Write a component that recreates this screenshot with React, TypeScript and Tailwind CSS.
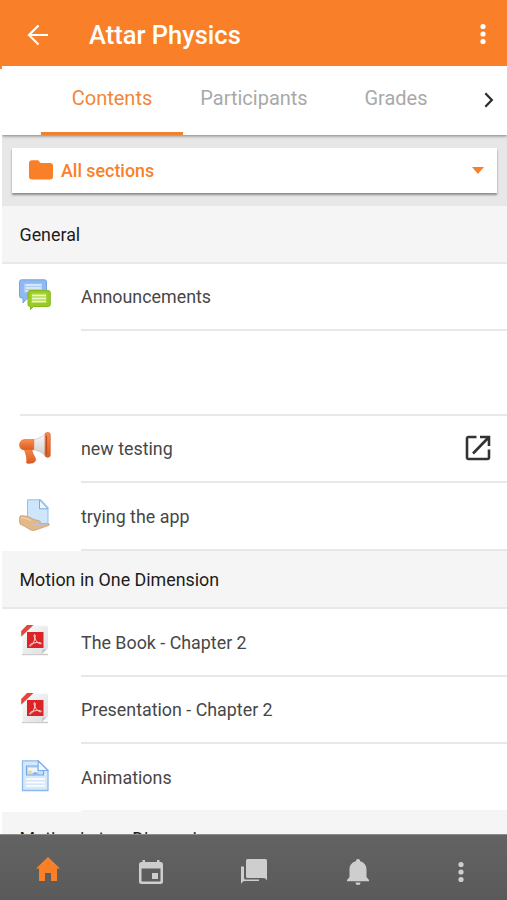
import type { ReactNode } from "react";

type Activity = { id: string; title: string; icon: ReactNode; external?: boolean };

const TABS = [
  { label: "Contents", active: true },
  { label: "Participants", active: false },
  { label: "Grades", active: false },
];

function ForumIcon() {
  return (
    <svg viewBox="0 0 32 32" className="h-8 w-8">
      <path d="M2.500.8h23a2 2 0 0 1 2 2V17a2 2 0 0 1-2 2H8.500l-4.500 5V19H2.500a2 2 0 0 1-2-2V2.800a2 2 0 0 1 2-2z" fill="#8fb9f0" stroke="#74a3e4" />
      <path d="M5 4.500h18v9H5z" fill="#a9cbf6" />
      <path d="M6.500 6h16M6.500 9h16M6.500 12h8" stroke="#e6f0fd" strokeWidth="1.400" />
      <path d="M11 11.500h18.300a2 2 0 0 1 2 2v12a2 2 0 0 1-2 2H14.500l-3 3v-3H11a2 2 0 0 1-2-2v-12a2 2 0 0 1 2-2z" fill="#9acb22" stroke="#82b720" />
      <path d="M12.500 14.500h15v9.500h-15z" fill="#b4dc4c" />
      <path d="M13 16.500h14M13 19.500h14M13 22.500h14" stroke="#f0fad0" strokeWidth="1.400" />
    </svg>
  );
}

function MegaphoneIcon() {
  return (
    <svg viewBox="0 0 32 32" className="h-8 w-8">
      <defs>
        <linearGradient id="horn" x1="0" y1="0" x2="0" y2="1">
          <stop offset="0" stopColor="#fb8f4c" />
          <stop offset="1" stopColor="#dc5a20" />
        </linearGradient>
        <linearGradient id="cone" x1="0" y1="0" x2="0" y2="1">
          <stop offset="0" stopColor="#fcfcfc" />
          <stop offset="1" stopColor="#cbcbcb" />
        </linearGradient>
      </defs>
      <path d="M4.500 15.500h8.700c-.7 2.500.1 5 1.500 7.500l1.900 4c.4 1-.2 1.800-.8 2.500-.4.900-1.300 1.300-2.300 1.400l-4.500.5c-1.500-.2-1.700-.8-1.400-1.800.7-2.400-.4-8.100-3.100-14.100z" fill="url(#horn)" stroke="#cf5420" strokeWidth=".6" />
      <path d="M14 7.600c5-.5 9-2.600 12.500-6.400v23c-3.500-4-7.500-6-12.500-6.500z" fill="url(#cone)" stroke="#bdbdbd" strokeWidth=".6" />
      <path d="M14.800 7.500v10.200H3.500C1.500 17 .6 15 .6 12.700.6 10 2.500 7.900 5.500 7.500z" fill="url(#horn)" stroke="#dc6a34" strokeWidth=".6" />
      <rect x="26" y=".6" width="5.300" height="24.600" rx="2.200" fill="url(#horn)" stroke="#cf5420" strokeWidth=".6" />
      <path d="M27.600 4v18" stroke="#b9471a" strokeWidth="1" strokeLinecap="round" />
    </svg>
  );
}

function AssignIcon() {
  return (
    <svg viewBox="0 0 32 32" className="h-8 w-8">
      <path d="M8.500.8H22l7 7.500V26H8.500z" fill="#cde6fb" stroke="#93c0ec" />
      <path d="M20.500.8v9H29z" fill="#eef7ff" stroke="#76aae4" />
      <path d="M1 17c4-.6 8 .2 11 2 2.500 1.500 5 2.200 7.500 2.500 2 .3 2.500 2 1 3l9.500.3c.8.600.3 1.300-.6 1.800L16 31.200c-2 .5-4 .2-6-1.200l-4-2.500-5-2.500C.3 22 .3 19 1 17z" fill="#e3b98c" stroke="#c39463" strokeWidth=".7" />
      <path d="M13.500 24.800h7l8.500.2-8 1.600-7-.6z" fill="#b7c3da" />
      <path d="M2 19c3-.4 7 .5 10 2.500" stroke="#f3d2a8" strokeWidth="1.300" fill="none" />
    </svg>
  );
}

function PdfIcon() {
  return (
    <svg viewBox="0 0 32 32" className="h-8 w-8">
      <defs>
        <linearGradient id="sheet" x1="0" y1="0" x2="1" y2="1">
          <stop offset="0" stopColor="#fafafa" />
          <stop offset="1" stopColor="#dcdde1" />
        </linearGradient>
      </defs>
      <path d="M3 29.500h26" stroke="#c8c8c8" strokeWidth="1.400" />
      <path d="M13 .8h14a2 2 0 0 1 2 2V23l-6.500 6.200H5A1.500 1.500 0 0 1 3.500 27.700V11z" fill="url(#sheet)" />
      <path d="M22.500 29.200c1-1.500 1-3.200.8-4.700 2 .2 4.300 0 5.700-1.500z" fill="#c3c4c8" />
      <path d="M8 0h6.500L2.200 11.800V6z" fill="#e2473d" />
      <path d="M8 7h16.500v16H8z" fill="#de2326" />
      <path d="M15.500 9.500c1 0 .8 2.500.3 4.500-.8 3-2.800 6.500-4.600 7-1.300.2-.6-1.600 2-2.500 2.500-.9 6-1.300 8.200-.8 2 .6.5 1.700-1.200.8-2.300-1.100-4.300-4-4.900-6.500-.3-1.500-.3-2.500.2-2.500z" fill="none" stroke="#fbd8d6" strokeWidth="1" />
    </svg>
  );
}

function PageIcon() {
  return (
    <svg viewBox="0 0 32 32" className="h-8 w-8">
      <path d="M3.500.8h15.700L29 10.500v20H3.500z" fill="#d6e9fb" stroke="#8db8ef" strokeWidth="1.300" />
      <path d="M7.500 6h12l5 4.500V15h-17z" fill="#c5def8" stroke="#77a8e8" strokeWidth="1.200" />
      <path d="M9 8h9v5.500H9z" fill="#eef5fb" />
      <path d="M9 14v-3l2.500-1 3 4z" fill="#e6dd9c" />
      <path d="M13 14.200l3-2.500 4 2.500z" fill="#7fb0ea" />
      <path d="M19.200.8v9.700H29z" fill="#f1f8ff" stroke="#80aeeb" strokeWidth="1.200" />
      <path d="M7 19h19M7 22.500h19M7 26h19" stroke="#fff" strokeWidth="1.600" />
    </svg>
  );
}

function DotsIcon({ className }: { className: string }) {
  return (
    <svg viewBox="0 0 6 22" className={className} fill="currentColor">
      <circle cx="3" cy="3.500" r="2.600" />
      <circle cx="3" cy="11" r="2.600" />
      <circle cx="3" cy="18.500" r="2.600" />
    </svg>
  );
}

const GENERAL: Activity[] = [
  { id: "new-testing", title: "new testing", icon: <MegaphoneIcon />, external: true },
  { id: "trying", title: "trying the app", icon: <AssignIcon /> },
];

const MOTION: Activity[] = [
  { id: "book", title: "The Book - Chapter 2", icon: <PdfIcon /> },
  { id: "presentation", title: "Presentation - Chapter 2", icon: <PdfIcon /> },
  { id: "animations", title: "Animations", icon: <PageIcon /> },
];

function ActivityRow({ title, icon, external }: Activity) {
  return (
    <div className="group flex h-[67.7px] shrink-0 pl-[17px]">
      <div className="w-[62px] shrink-0 pt-4">{icon}</div>
      <div className="flex flex-1 items-center justify-between border-b-2 border-[#e8e8e8] pr-[15px] group-last-of-type:border-[#f4f4f4]">
        <span className="pt-[1.5px] text-[17.85px] leading-none text-[#474747]">{title}</span>
        {external && (
          <svg viewBox="0 0 28 28" className="h-7 w-7" fill="none" stroke="#333" strokeWidth="2.600">
            <path d="M12.500 3H4.500A1.500 1.500 0 0 0 3 4.500v19A1.500 1.500 0 0 0 4.500 25h19a1.500 1.500 0 0 0 1.500-1.500V15.500" />
            <path d="M16 3h9v9M25 3 9 19.500" />
          </svg>
        )}
      </div>
    </div>
  );
}

function SectionHeader({ title }: { title: string }) {
  return (
    <h2 className="flex h-[58px] shrink-0 items-center border-b-2 border-[#e9e9e9] bg-[#f5f5f5] pt-0.5 pl-[17.5px] text-[17.85px] leading-none text-[#1c1c1c] last:h-[54px]">
      {title}
    </h2>
  );
}

export default function App() {
  return (
    <div className="flex h-[900px] w-[507px] flex-col overflow-hidden bg-white font-['Roboto',sans-serif]">
      <header className="flex h-[66px] shrink-0 items-center bg-[#f98029] pr-[21.5px] pl-[27px] text-white">
        <svg viewBox="0 0 22 22" className="mt-1 h-[22px] w-[22px]" fill="none" stroke="currentColor" strokeWidth="2.200">
          <path d="M11.500 1.500 2 11l9.500 9.500M2 11h19" />
        </svg>
        <h1 className="mt-[5px] ml-10 flex-1 text-[25.5px] leading-none font-medium">Attar Physics</h1>
        <DotsIcon className="mt-0.5 h-[22px] w-[6px]" />
      </header>

      <main className="flex min-h-0 flex-1 flex-col overflow-hidden">
        <div className="flex shrink-0">
          <div className="h-[2.5px] w-0.5 bg-[#f98029]" />
          <nav className="z-10 flex h-[69px] flex-1 bg-white pl-[39px] shadow-[0_1px_3px_rgba(0,0,0,0.45)] [clip-path:inset(0_0_-5px_0)]">
            {TABS.map((t) => (
              <div
                key={t.label}
                className={
                  t.active
                    ? "flex w-[142px] items-center justify-center border-b-3 border-[#f0822f] pb-0.5 text-[20px] text-[#f0873a]"
                    : "flex w-[142px] items-center justify-center border-b-3 border-transparent pb-0.5 text-[20px] text-[#a9a9a9]"
                }
              >
                {t.label}
              </div>
            ))}
            <svg viewBox="0 0 10 16" className="mt-[26px] ml-[17px] h-4 w-[10px]" fill="none" stroke="#2e2e2e" strokeWidth="2.300">
              <path d="m1.300 1.300 6.500 6.700-6.500 6.700" />
            </svg>
          </nav>
        </div>

        <div className="ml-0.5 flex shrink-0 flex-col">
          <div className="bg-[#e7e7e7] px-[10px] py-[13px]">
            <button className="flex h-[45px] w-full items-center bg-white pr-[13.5px] pl-[17px] text-[#f98029] shadow-[0_2px_2px_rgba(0,0,0,0.4)]">
              <svg viewBox="0 0 24 20" className="-mt-0.5 h-5 w-6" fill="currentColor">
                <path d="M3 .3h5.500c1.800 0 1.800 2.700 3.500 2.700h9a3 3 0 0 1 3 3v10.500a3 3 0 0 1-3 3H3a3 3 0 0 1-3-3V3.300a3 3 0 0 1 3-3z" />
              </svg>
              <span className="ml-2 flex-1 text-left text-[17.85px] leading-none font-medium">All sections</span>
              <svg viewBox="0 0 12 7" className="h-[7px] w-3" fill="currentColor">
                <path d="M0 0h12L6 7z" />
              </svg>
            </button>
          </div>

          <SectionHeader title="General" />
          <div className="flex h-[67px] shrink-0 pl-[17px]">
            <div className="w-[62px] shrink-0 pt-[15px]">
              <ForumIcon />
            </div>
            <div className="flex flex-1 items-center border-b-2 border-[#e8e8e8]">
              <span className="text-[17.85px] leading-none text-[#474747]">Announcements</span>
            </div>
          </div>
          <div className="ml-[18px] h-[84.5px] shrink-0 border-b-2 border-[#e8e8e8]" />
          {GENERAL.map((a) => (
            <ActivityRow key={a.id} {...a} />
          ))}

          <SectionHeader title="Motion in One Dimension" />
          {MOTION.map((a) => (
            <ActivityRow key={a.id} {...a} />
          ))}
          <SectionHeader title="Motion in two Dimensions" />
        </div>
      </main>

      <footer className="grid h-[66px] shrink-0 grid-cols-[95px_112px_94px_114px_92px] items-center justify-items-center border-t border-[#8a8a8a] bg-linear-to-b from-[#636363] to-[#5a5a5a] text-[#cecece]">
        <svg viewBox="0 0 24 24" className="mt-[3px] h-6 w-6 text-[#f98029]" fill="currentColor">
          <path d="M12 0 24 11.500h-3V24h-6v-8H9v8H3V11.500H0z" />
        </svg>
        <svg viewBox="0 0 24 24" className="mt-[9px] h-6 w-6" fill="currentColor" fillRule="evenodd">
          <path d="M3.500 0H6v2h12V0h2.500v2h1A2.500 2.500 0 0 1 24 4.500v17a2.500 2.500 0 0 1-2.500 2.500h-19A2.500 2.500 0 0 1 0 21.500v-17A2.500 2.500 0 0 1 2.500 2h1zM2.500 8.500v12.300c0 .4.300.7.700.7h17.600c.4 0 .7-.3.700-.7V8.500zM13 13h6v6h-6z" />
        </svg>
        <svg viewBox="0 0 26 26" className="mt-2 h-[26px] w-[26px]" fill="currentColor">
          <path d="M6.500 0h18A1.500 1.500 0 0 1 26 1.500V21.500c-1-1.700-2-2.500-4-2.500H6.500A1.500 1.500 0 0 1 5 17.500v-16A1.500 1.500 0 0 1 6.500 0z" />
          <path d="M0 7.500h3V19a1.500 1.500 0 0 0 1.500 1.500H18V22H4c-2 0-3 1-4 3z" />
        </svg>
        <svg viewBox="0 0 22 26" className="mt-2 h-[26px] w-[22px]" fill="currentColor">
          <path d="M11 0c1.300 0 2.100.9 2.100 2.300 4 .9 6.400 4.200 6.400 8.200v7.500L22 21v1.300H0V21l2.500-3v-7.500c0-4 2.400-7.300 6.400-8.200C8.900.9 9.700 0 11 0zM8.500 23.500h5a2.500 2.500 0 0 1-5 0z" />
        </svg>
        <DotsIcon className="mt-2 h-[22px] w-[6px]" />
      </footer>
    </div>
  );
}
